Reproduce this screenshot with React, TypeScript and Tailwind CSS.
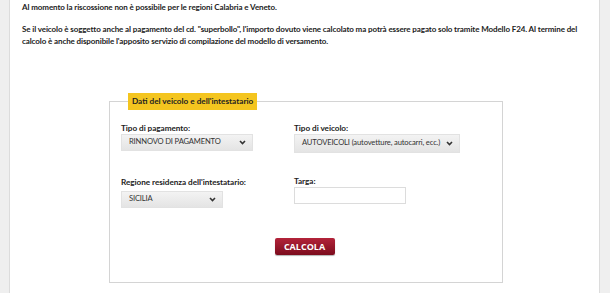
import React from "react";

const Chevron = () => (
  <svg width="7" height="5" viewBox="0 0 7 5" className="shrink-0">
    <path d="M1 1 L3.5 3.5 L6 1" fill="none" stroke="#333" strokeWidth="1.6" />
  </svg>
);

const FakeSelect = ({ text, w, h = "h-[17px]" }: { text: string; w: string; h?: string }) => (
  <div
    className={`${w} ${h} flex items-center justify-between pl-[7px] pr-[6px] bg-gradient-to-b from-[#f3f3f3] to-[#e4e4e4] border border-[#e2e2e2] text-[7.6px] tracking-[-0.15px] text-[#333] font-['Lato',sans-serif]`}
  >
    <span className="whitespace-nowrap">{text}</span>
    <Chevron />
  </div>
);

const Label = ({ children }: { children: React.ReactNode }) => (
  <div className="text-[8.2px] tracking-[-0.05px] font-bold text-[#222] leading-[12px]">{children}</div>
);

export default function App() {
  return (
    <div className="w-[610px] h-[293px] overflow-hidden bg-[#efefef] flex font-['Lato',sans-serif]">
      <div className="ml-[9px] w-[591px] h-[293px] bg-white border-x border-[#dcdcdc] pl-[12px] pt-[1px]">
        <p className="text-[8px] tracking-[-0.1px] leading-[12.5px] font-bold text-[#222] whitespace-nowrap">
          Al momento la riscossione non è possibile per le regioni Calabria e Veneto.
        </p>
        <p className="mt-[9px] text-[8px] tracking-[-0.1px] leading-[12.5px] font-bold text-[#222] whitespace-nowrap">
          Se il veicolo è soggetto anche al pagamento del cd. "superbollo", l'importo dovuto viene calcolato ma potrà essere pagato solo tramite Modello F24. Al termine del
          <br />
          calcolo è anche disponibile l'apposito servizio di compilazione del modello di versamento.
        </p>
        <fieldset className="ml-[87px] mt-[45px] w-[394px] h-[190px] border border-[#d4d4d4] pl-[11px]">
          <legend className="ml-[7px] h-[17px] px-[4px] bg-[#f4c51f] text-[8.2px] font-bold text-[#222] leading-[17px]">
            Dati del veicolo e dell'intestatario
          </legend>
          <div className="grid grid-cols-[173px_1fr] mt-[12px]">
            <div>
              <Label>Tipo di pagamento:</Label>
              <div className="mt-0">
                <FakeSelect text="RINNOVO DI PAGAMENTO" w="w-[132px]" />
              </div>
            </div>
            <div>
              <Label>Tipo di veicolo:</Label>
              <div className="mt-0">
                <FakeSelect text="AUTOVEICOLI (autovetture, autocarri, ecc.)" w="w-[166px]" h="h-[19px]" />
              </div>
            </div>
            <div className="mt-[23px]">
              <Label>Regione residenza dell'intestatario:</Label>
              <div className="mt-[3px]">
                <FakeSelect text="SICILIA" w="w-[102px]" />
              </div>
            </div>
            <div className="mt-[22px]">
              <Label>Targa:</Label>
              <div className="mt-0 w-[112px] h-[17px] border border-[#dcdcdc] bg-white" />
            </div>
          </div>
          <div className="flex justify-center mt-[30px] pr-[14px]">
            <button className="w-[60px] h-[17px] rounded-[2px] bg-gradient-to-b from-[#b3233a] to-[#7c0c1d] text-white text-[9px] font-bold font-['Open_Sans',sans-serif] leading-[17px] shadow-[0_1px_1px_rgba(0,0,0,0.3)]">
              CALCOLA
            </button>
          </div>
        </fieldset>
      </div>
    </div>
  );
}
